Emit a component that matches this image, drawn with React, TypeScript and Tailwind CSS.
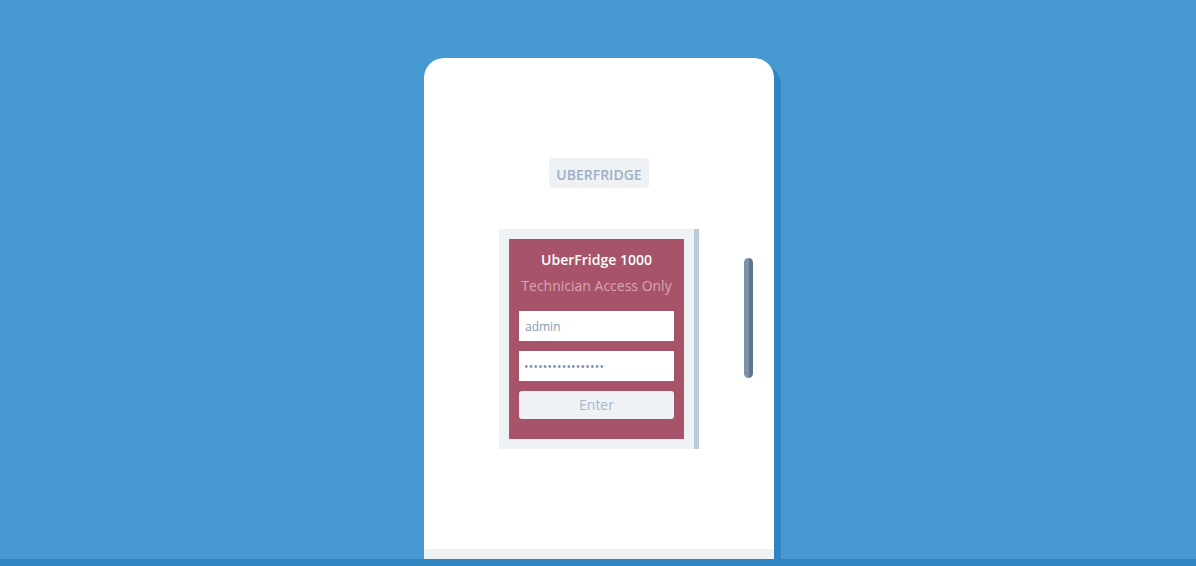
import React from 'react'

export default function App() {
  return (
    <div className="min-h-[566px] bg-[#4698d1] flex flex-col" style={{ fontFamily: '"Open Sans", "Liberation Sans", sans-serif' }}>
      <div className="flex-1 flex justify-center pt-[58px] pl-[2px]">
        {/* fridge */}
        <div className="relative w-[350px] h-[501px] bg-white rounded-t-[20px] shadow-[7px_7px_0_0_#2f84c1] flex flex-col">
          <div className="flex-1 flex flex-col items-center pt-[100px]">
            <div className="h-[30px] w-[100px] rounded-[4px] bg-[#eff2f5] flex items-center justify-center pt-[2px] text-[14px] font-semibold text-[#9fb0c4]">
              UBERFRIDGE
            </div>

            <div className="mt-[41px] w-[200px] bg-[#eff2f5] border-r-[5px] border-[#bccad6] p-[10px]">
              <div className="bg-[#a7536a] px-[10px] pt-[11px] pb-[20px] flex flex-col">
                <p className="text-center text-white font-semibold text-[14px] leading-[20px]">UberFridge 1000</p>
                <p className="text-center text-[#dca4b4] text-[14px] leading-[20px] mt-[6px]">Technician Access Only</p>
                <input
                  readOnly
                  value="admin"
                  className="mt-[15px] h-[30px] w-full bg-white px-[6px] text-[12px] text-[#8a9bb2] outline-none"
                />
                <input
                  readOnly
                  type="password"
                  value="•••••••••••••••••"
                  className="mt-[10px] h-[30px] w-full bg-white px-[5px] text-[12px] tracking-[0.2px] text-[#7d8fa8] outline-none"
                />
                <button className="mt-[10px] h-[28px] w-full rounded-[3px] bg-[#eff2f5] text-[14px] leading-[26px] text-[#a9b8c8]">
                  Enter
                </button>
              </div>
            </div>
          </div>
          <div className="h-[10px] bg-[#eff2f5]" />

          {/* handle */}
          <div className="absolute left-[320px] top-[200px] w-[9px] h-[120px] rounded-full bg-[linear-gradient(90deg,#7a91a8_50%,#5f758b_50%)]" />
        </div>
      </div>
      <div className="h-[7px] bg-[#3084c0]" />
    </div>
  )
}
